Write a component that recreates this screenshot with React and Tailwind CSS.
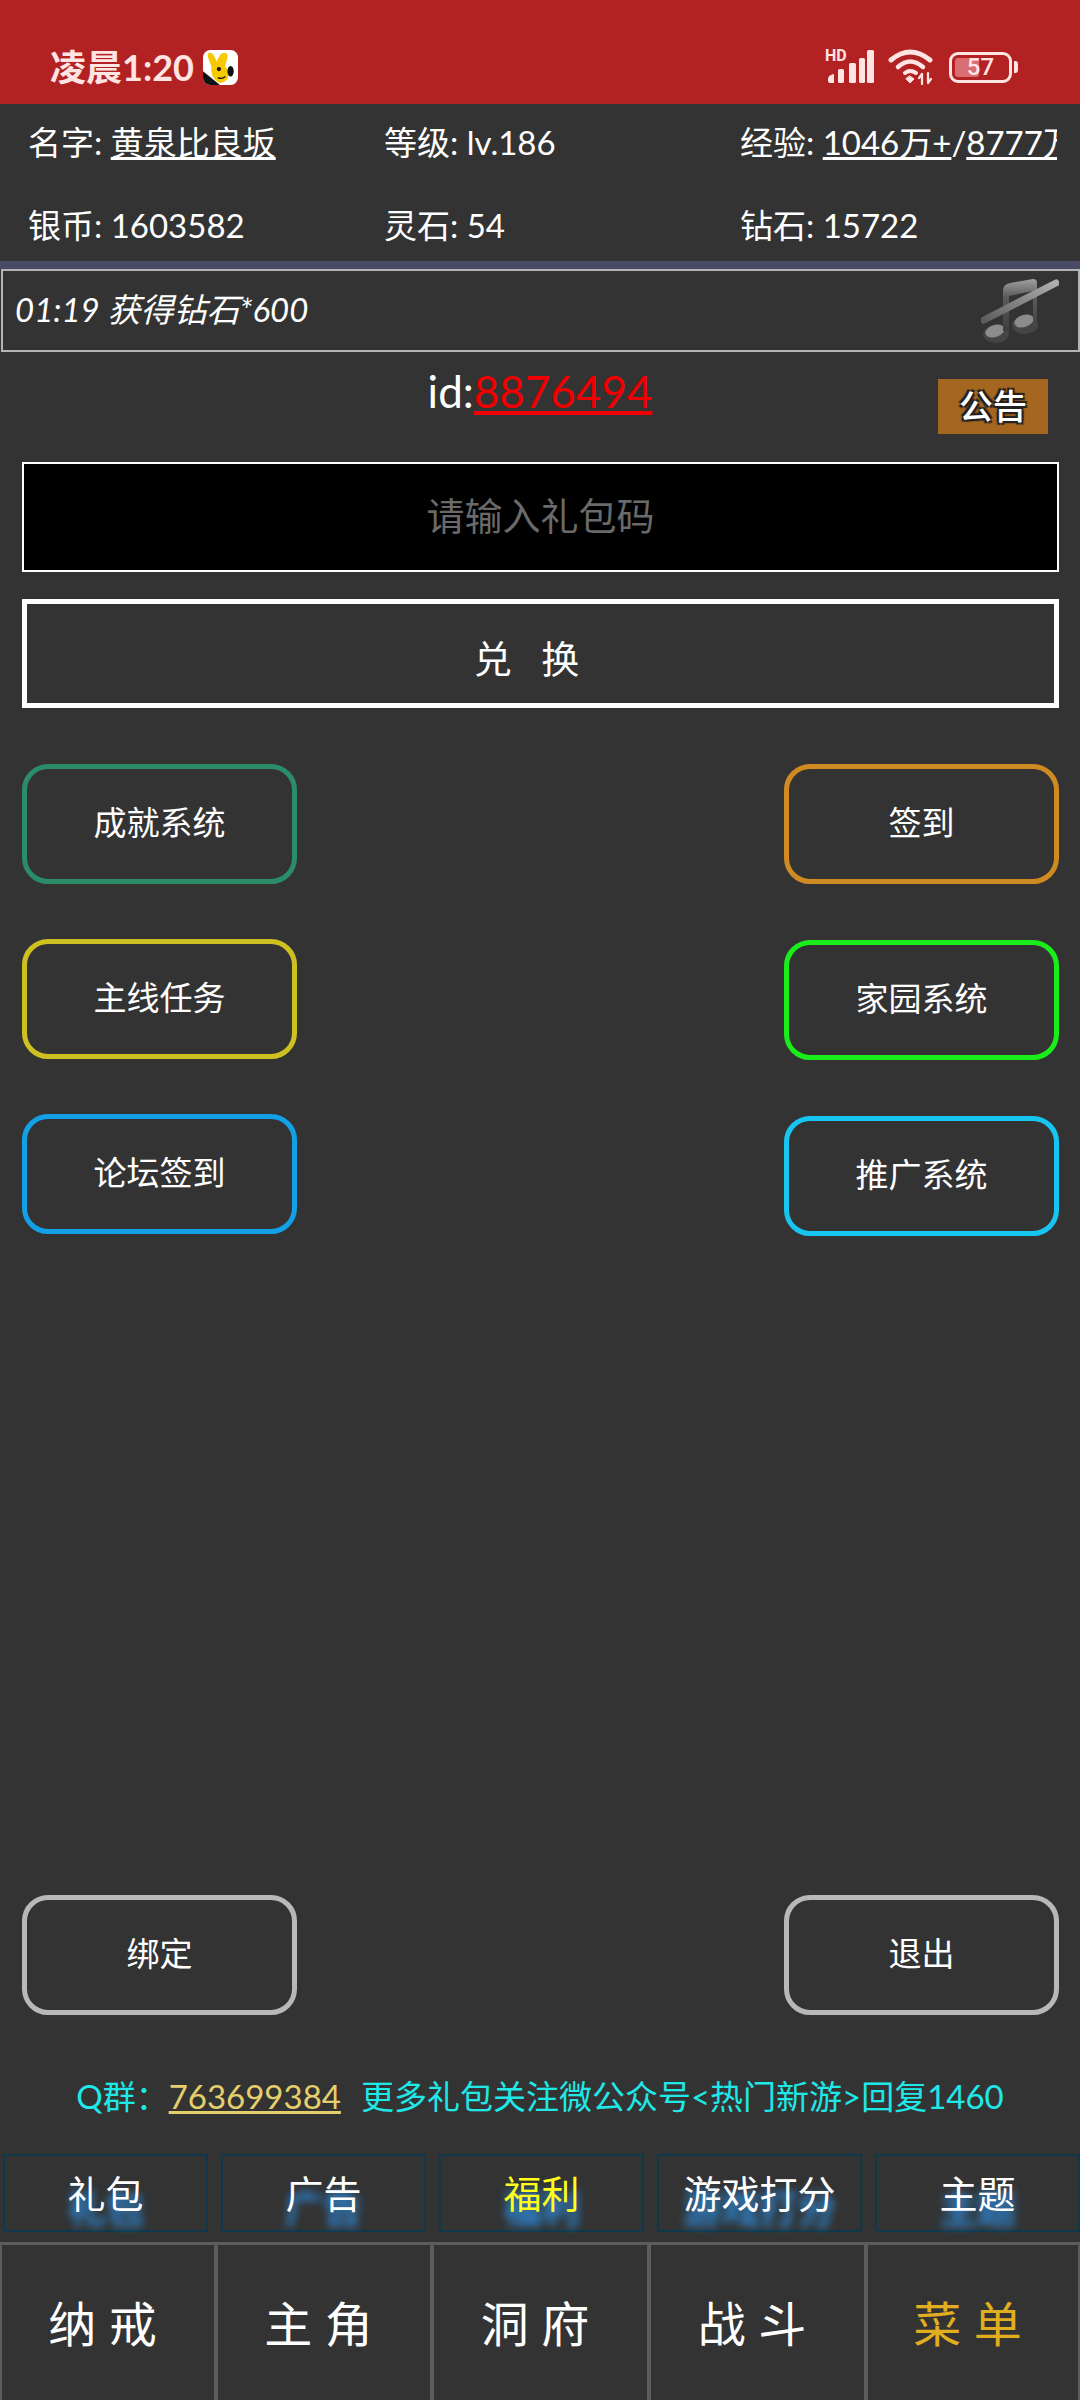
const FONT = "font-['Lato','Noto_Sans_CJK_SC',sans-serif]"

const leftButtons = [
  { label: '成就系统', color: 'border-[#2a8d68]', cls: 'mt-[56px]' },
  { label: '主线任务', color: 'border-[#cfc022]', cls: 'mt-[55px]' },
  { label: '论坛签到', color: 'border-[#14a0e6]', cls: 'mt-[55px]' },
]
const rightButtons = [
  { label: '签到', color: 'border-[#d08a22]', cls: 'mt-[56px]' },
  { label: '家园系统', color: 'border-[#1aee1a]', cls: 'mt-[56px]' },
  { label: '推广系统', color: 'border-[#17c6f0]', cls: 'mt-[56px]' },
]
const tabs = [
  { label: '礼包' },
  { label: '广告' },
  { label: '福利', hot: true },
  { label: '游戏打分' },
  { label: '主题' },
]
const navs = ['纳 戒', '主 角', '洞 府', '战 斗', '菜 单']

function GameButton({ label, color, cls }) {
  return (
    <button className={`flex h-[120px] w-[275px] items-center justify-center rounded-[26px] border-[5px] pb-[2px] text-[33px] text-white ${color} ${cls}`}>
      {label}
    </button>
  )
}

function Bunny() {
  return (
    <svg width="35" height="35" viewBox="0 0 33 33">
      <defs>
        <clipPath id="bunny-clip"><rect width="33" height="33" rx="7" /></clipPath>
      </defs>
      <g clipPath="url(#bunny-clip)">
        <rect width="33" height="33" fill="#fff" />
        <path d="M0 20 L16 33 L0 33 Z" fill="#111" />
        <path d="M5 3 C9 1 11 6 13 11 C15 5 18 1 22 3 C25 6 21 12 21 16 C26 20 25 30 17 31 C10 30 7 22 8 16 C7 11 3 6 5 3 Z" fill="#f7c900" />
        <ellipse cx="26" cy="20" rx="3" ry="5" fill="#111" />
        <circle cx="15" cy="18" r="2" fill="#111" />
        <path d="M14 26 Q18 28 21 25" stroke="#111" strokeWidth="1.2" fill="none" />
      </g>
    </svg>
  )
}

function StatusIcons() {
  return (
    <div className="flex items-center text-[#ffe4e4]">
      <div className="relative h-[34px] w-[50px]">
        <span className="absolute left-0 top-[-2px] font-['Roboto',sans-serif] text-[16px] font-bold leading-[16px]">HD</span>
        <svg className="absolute left-0 top-0" width="50" height="34" viewBox="0 0 50 34" fill="currentColor">
          <path d="M3 29 Q3 25 9 24 L9 33 L5 33 Q3 33 3 31 Z" />
          <rect x="13" y="19" width="6" height="14" rx="1.5" />
          <rect x="24" y="13" width="7" height="20" rx="1.5" />
          <rect x="42" y="0" width="7" height="33" rx="1.5" />
          <rect x="34" y="8" width="6" height="25" rx="1.5" />
        </svg>
      </div>
      <svg className="ml-[13px]" width="46" height="36" viewBox="0 0 46 36" fill="none" stroke="currentColor" strokeLinecap="round">
        <path d="M3 11 Q22 -5 42 11" strokeWidth="5" />
        <path d="M10 18 Q22 7 35 18" strokeWidth="4.5" />
        <path d="M17 24 Q22 20 28 24" strokeWidth="4" />
        <path d="M18 30 L22 34 L26 30 L22 27 Z" fill="currentColor" strokeWidth="1" />
        <path d="M34 35 L34 25 M31 29 L34 25" strokeWidth="2.2" />
        <path d="M40 24 L40 34 M43 30 L40 34" strokeWidth="2.2" />
      </svg>
      <div className="relative ml-[15px] flex h-[31px] w-[63px] items-center justify-center overflow-hidden rounded-[9px] border-[3px] border-[#ffe4e4]">
        <div className="absolute bottom-[3px] left-[3px] top-[3px] w-[24px] rounded-[3px] bg-[#d86e72]" />
        <span className="relative font-['Roboto',sans-serif] text-[24px] font-medium leading-none">57</span>
      </div>
      <div className="ml-[2px] h-[12px] w-[4px] rounded-r-[3px] bg-[#ffe4e4]" />
    </div>
  )
}

function MutedMusic() {
  return (
    <svg width="78" height="64" viewBox="0 0 78 64">
      <defs>
        <linearGradient id="note" x1="0" y1="0" x2="0" y2="1">
          <stop offset="0" stopColor="#a0a0a0" />
          <stop offset="0.35" stopColor="#5a5a5a" />
          <stop offset="1" stopColor="#3e3e3e" />
        </linearGradient>
        <linearGradient id="slash" x1="0" y1="1" x2="1" y2="0">
          <stop offset="0" stopColor="#5e5e5e" />
          <stop offset="1" stopColor="#aeaeae" />
        </linearGradient>
      </defs>
      <ellipse cx="15" cy="55" rx="13" ry="9" fill="#454545" />
      <ellipse cx="44" cy="46" rx="13" ry="9" fill="#454545" />
      <ellipse cx="14" cy="52" rx="10" ry="6" fill="#8c8c8c" transform="rotate(-18 14 52)" />
      <ellipse cx="43" cy="42" rx="10" ry="6" fill="#8c8c8c" transform="rotate(-18 43 42)" />
      <path d="M22 52 L22 12 Q22 5 29 4 L52 0 Q56 0 56 4 L56 42 L52 42 L52 12 L28 17 L28 52 Z" fill="url(#note)" />
      <path d="M3 41 L75 4" stroke="url(#slash)" strokeWidth="7" strokeLinecap="round" />
    </svg>
  )
}

export default function App() {
  return (
    <div className={`flex h-[2400px] w-[1080px] flex-col overflow-hidden bg-[#333333] text-white ${FONT}`}>
      <div className="flex h-[104px] shrink-0 items-start justify-between bg-[#b22222] pl-[50px] pr-[62px] pt-[49px]">
        <div className="flex items-center">
          <span className="text-[36px] font-bold leading-[36px] text-[#ffe4e4]">凌晨1:20</span>
          <span className="ml-[9px] flex"><Bunny /></span>
        </div>
        <StatusIcons />
      </div>

      <div className="h-[157px] shrink-0 pl-[28px] pt-[18px] text-[33px] leading-[40px]">
        <div className="grid grid-cols-[356px_356px_317px] gap-y-[43px]">
          <div>名字: <span className="underline">黄泉比良坂</span></div>
          <div>等级: lv.186</div>
          <div className="overflow-hidden whitespace-nowrap">经验: <span className="underline">1046万+</span>/<span className="underline">8777万</span></div>
          <div>银币: 1603582</div>
          <div>灵石: 54</div>
          <div>钻石: 15722</div>
        </div>
      </div>

      <div className="h-[8px] shrink-0 bg-[#484a68]" />
      <div className="ml-[1px] flex h-[83px] shrink-0 items-center justify-between border-2 border-[#b4b4b4] pl-[12px] pr-[19px]">
        <span className="pb-[2px] text-[33px] italic">01:19 获得钻石*600</span>
        <MutedMusic />
      </div>

      <div className="grid h-[110px] shrink-0 grid-cols-[1fr_auto_1fr]">
        <div />
        <div className="mt-[17px] text-[44px] leading-[44px]">
          id:<span className="text-[#f00000] underline">8876494</span>
        </div>
        <div className="mr-[32px] mt-[27px] flex h-[55px] w-[110px] items-center justify-center justify-self-end bg-[#a5661f] pb-[2px] text-[34px] font-medium [text-shadow:2px_2px_1px_#222,-2px_-2px_1px_#222,2px_-2px_1px_#222,-2px_2px_1px_#222]">
          公告
        </div>
      </div>

      <div className="ml-[22px] mr-[21px] flex h-[110px] shrink-0 items-center justify-center border-2 border-white bg-black pb-[3px] text-[38px] text-[#6a6a6a]">
        请输入礼包码
      </div>
      <button className="ml-[22px] mr-[21px] mt-[27px] flex h-[109px] shrink-0 items-center justify-center border-[5px] border-white pr-[28px] pt-[10px] text-[38px] [word-spacing:20px]">
        兑 换
      </button>

      <div className="ml-[22px] mr-[21px] flex shrink-0 justify-between">
        <div className="flex flex-col">
          {leftButtons.map((b) => <GameButton key={b.label} {...b} />)}
        </div>
        <div className="flex flex-col">
          {rightButtons.map((b) => <GameButton key={b.label} {...b} />)}
        </div>
      </div>

      <div className="ml-[22px] mr-[21px] mt-auto flex shrink-0 justify-between">
        <GameButton label="绑定" color="border-[#b8b8b8]" cls="" />
        <GameButton label="退出" color="border-[#b8b8b8]" cls="" />
      </div>

      <div className="mt-[62px] flex h-[40px] shrink-0 items-center justify-center pb-[2px] text-[33px] leading-[40px] text-[#1fe8e8]">
        <span>Q群：</span>
        <span className="text-[#e4cf6c] underline">763699384</span>
        <span className="ml-[20px]">更多礼包关注微公众号&lt;热门新游&gt;回复1460</span>
      </div>

      <div className="ml-[3px] mt-[37px] grid h-[78px] shrink-0 grid-cols-5 gap-x-[13px]">
        {tabs.map((t) => (
          <div
            key={t.label}
            className={`flex items-center justify-center border-2 border-[#10384c] pt-[1px] text-[38px] [text-shadow:0_14px_8px_#2f80c8,0_14px_10px_#2f80c8] ${t.hot ? 'text-[#ffff19]' : 'text-white'}`}
          >
            {t.label}
          </div>
        ))}
      </div>

      <div className="-ml-[2px] mt-[10px] grid h-[158px] shrink-0 grid-cols-[216px_216px_217px_217px_216px] border-t-[3px] border-[#5c5c5c]">
        {navs.map((n, i) => (
          <div key={n} className={`flex items-center justify-center border-l-[4px] border-[#5c5c5c] pr-[11px] pt-[2px] text-[48px] ${i === 4 ? 'border-r-[2px] text-[#e0ae1e]' : ''}`}>
            {n}
          </div>
        ))}
      </div>
    </div>
  )
}
